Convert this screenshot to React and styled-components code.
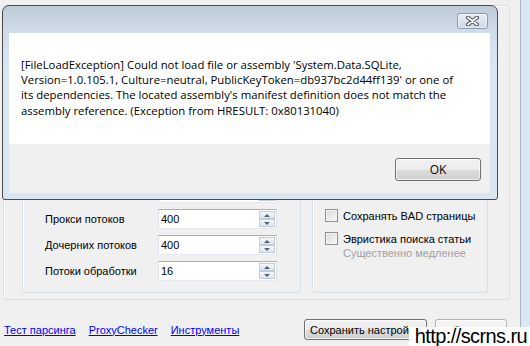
import React from 'react';
import styled, { createGlobalStyle } from 'styled-components';

const GlobalStyle = createGlobalStyle`
  html, body {
    margin: 0;
    padding: 0;
  }
  body {
    width: 530px;
    height: 346px;
    overflow: hidden;
    background: #f0f0f0;
    font-family: "Liberation Sans", Arial, sans-serif;
    font-size: 11px;
    color: #000;
  }
`;

const Window = styled.div`
  position: relative;
  width: 530px;
  height: 346px;
  display: flex;
  overflow: hidden;
`;

const Content = styled.div`
  width: 520px;
  display: flex;
  flex-direction: column;
  padding: 5px 0 0 3px;
  box-sizing: border-box;
`;

const FrameStrip = styled.div`
  flex: 1;
  border-left: 1px solid #aab5c2;
  background: #dbe6f3;
`;

const OuterGroup = styled.div`
  width: 507px;
  height: 295px;
  box-sizing: border-box;
  border: 1px solid #d5dfe5;
  border-radius: 3px;
  box-shadow: inset 1px 1px 0 #fff;
  padding: 20px 21px 6px 18px;
  display: flex;
  gap: 11px;
`;

const Panel = styled.div`
  width: ${(p) => (p.$width ? `${p.$width}px` : 'auto')};
  flex: ${(p) => (p.$width ? 'none' : '1')};
  box-sizing: border-box;
  border: 1px solid #d5dfe5;
  border-radius: 3px;
  box-shadow: inset 1px 1px 0 #fff;
  display: flex;
  flex-direction: column;
  justify-content: flex-end;
  padding: ${(p) => p.$pad};
`;

const Row = styled.div`
  height: 26px;
  display: flex;
  align-items: center;
  padding-left: 22px;
`;

const Label = styled.div`
  width: 113px;
`;

const NumberBox = styled.div`
  width: 119px;
  height: 20px;
  box-sizing: border-box;
  border: 1px solid #abadb3;
  border-color: #abadb3 #dbdfe6 #e3e9ef #e2e3ea;
  background: #fff;
  display: flex;
  align-items: center;
  padding-left: 2px;
`;

const Value = styled.div`
  flex: 1;
`;

const Spinner = styled.div`
  width: 16px;
  height: 16px;
  margin-right: 1px;
  display: flex;
  flex-direction: column;
`;

const SpinButton = styled.div`
  flex: 1;
  box-sizing: border-box;
  border: 1px solid #c3cbd4;
  background: linear-gradient(#f4f6f8, #dfe5ec);
  display: flex;
  align-items: center;
  justify-content: center;
`;

const Arrow = styled.div`
  width: 0;
  height: 0;
  border-left: 3px solid transparent;
  border-right: 3px solid transparent;
  ${(p) => (p.$up ? 'border-bottom' : 'border-top')}: 3px solid #4d6185;
`;

const CheckRow = styled.div`
  height: 15px;
  display: flex;
  align-items: center;
  gap: 5px;
  margin-bottom: ${(p) => p.$gap || 0}px;
`;

const CheckBox = styled.div`
  width: 13px;
  height: 13px;
  box-sizing: border-box;
  border: 1px solid #8e8f8f;
  background: linear-gradient(135deg, #d8d8d8, #f8f8f8);
  box-shadow: inset 0 0 0 1px #f4f4f4;
`;

const Hint = styled.div`
  margin-left: 18px;
  line-height: 14px;
  color: #a0a0a0;
`;

const Footer = styled.div`
  height: 21px;
  margin-top: 19px;
  display: flex;
  align-items: center;
  padding-right: 13px;
`;

const Links = styled.div`
  display: flex;
  gap: 13px;
  padding-left: 1px;
`;

const LinkText = styled.span`
  color: #0000ff;
  text-decoration: underline;
`;

const Buttons = styled.div`
  margin-left: auto;
  display: flex;
  gap: 8px;
`;

const WinButton = styled.div`
  width: ${(p) => p.$width}px;
  height: ${(p) => p.$height || 21}px;
  box-sizing: border-box;
  border: 1px solid ${(p) => (p.$disabled ? '#adb2b5' : '#707070')};
  border-radius: 3px;
  background: ${(p) =>
    p.$disabled
      ? '#f4f4f4'
      : 'linear-gradient(#f2f2f2 0%, #ebebeb 50%, #dddddd 51%, #cfcfcf 100%)'};
  box-shadow: inset 0 0 0 1px rgba(255, 255, 255, 0.7);
  color: ${(p) => (p.$disabled ? '#838383' : '#000')};
  font-size: ${(p) => p.$fontSize || 11}px;
  display: flex;
  align-items: center;
  justify-content: ${(p) => (p.$left ? 'flex-start' : 'center')};
  padding-left: ${(p) => (p.$left ? 5 : 0)}px;
  white-space: nowrap;
  overflow: hidden;
`;

const Dialog = styled.div`
  position: absolute;
  left: 2px;
  top: 5px;
  width: 496px;
  height: 195px;
  box-sizing: border-box;
  border: 1px solid #4b4b4b;
  border-radius: 7px 7px 3px 3px;
  background: linear-gradient(#bdcad8 0px, #d0dcea 26px, #dae5f2 60px, #dae5f2 100%);
  padding: 27px 7px 6px 6px;
  display: flex;
  flex-direction: column;
`;

const CloseButton = styled.div`
  position: absolute;
  left: 454px;
  top: 7px;
  width: 31px;
  height: 16px;
  box-sizing: border-box;
  border: 1px solid #8b9aab;
  border-radius: 3px;
  background: linear-gradient(#e9eef4, #cdd7e2);
  box-shadow: inset 0 0 0 1px rgba(255, 255, 255, 0.5);
  display: flex;
  align-items: center;
  justify-content: center;
`;

const Client = styled.div`
  flex: 1;
  display: flex;
  flex-direction: column;
  font-family: "Open Sans", "Noto Sans", sans-serif;
`;

const Message = styled.div`
  height: 111px;
  box-sizing: border-box;
  background: #fff;
  padding: 24px 0 0 12px;
  font-size: 11.35px;
  line-height: 15.2px;
  white-space: nowrap;
`;

const ButtonBar = styled.div`
  flex: 1;
  background: #f0f0f0;
  display: flex;
  justify-content: flex-end;
  padding: 14px 9px 0 0;
`;

const Watermark = styled.div`
  position: absolute;
  right: 0;
  bottom: 0;
  background: #fff;
  padding: 0 3px 0 6px;
  font-family: "Liberation Sans", Arial, sans-serif;
  font-size: 20px;
  letter-spacing: -0.6px;
  line-height: 19px;
  color: #000;
`;

const spinRows = [
  { label: 'Потоков', value: '50' },
  { label: 'Прокси потоков', value: '400' },
  { label: 'Дочерних потоков', value: '400' },
  { label: 'Потоки обработки', value: '16' },
];

const CloseGlyph = () => (
  <svg width="13" height="10" viewBox="0 0 13 10">
    <path d="M2 1.5 L11 8.5 M11 1.5 L2 8.5" stroke="#4a5360" strokeWidth="4" strokeLinecap="round" />
    <path d="M2 1.5 L11 8.5 M11 1.5 L2 8.5" stroke="#fff" strokeWidth="2" strokeLinecap="round" />
  </svg>
);

export default function App() {
  return (
    <>
      <GlobalStyle />
      <Window>
        <Content>
          <OuterGroup>
            <Panel $width={279} $pad="0 0 8px 0">
              {spinRows.map((r) => (
                <Row key={r.label}>
                  <Label>{r.label}</Label>
                  <NumberBox>
                    <Value>{r.value}</Value>
                    <Spinner>
                      <SpinButton>
                        <Arrow $up />
                      </SpinButton>
                      <SpinButton>
                        <Arrow />
                      </SpinButton>
                    </Spinner>
                  </NumberBox>
                </Row>
              ))}
            </Panel>
            <Panel $pad="0 0 32px 12px">
              <CheckRow $gap={8}>
                <CheckBox />
                <span>Сохранять BAD страницы</span>
              </CheckRow>
              <CheckRow>
                <CheckBox />
                <span>Эвристика поиска статьи</span>
              </CheckRow>
              <Hint>Существенно медленее</Hint>
            </Panel>
          </OuterGroup>
          <Footer>
            <Links>
              <LinkText>Тест парсинга</LinkText>
              <LinkText>ProxyChecker</LinkText>
              <LinkText>Инструменты</LinkText>
            </Links>
            <Buttons>
              <WinButton $width={123} $left>
                Сохранить настройки
              </WinButton>
              <WinButton $width={72} $disabled>
                Запуск
              </WinButton>
            </Buttons>
          </Footer>
        </Content>
        <FrameStrip />

        <Dialog>
          <CloseButton>
            <CloseGlyph />
          </CloseButton>
          <Client>
            <Message>
              [FileLoadException] Could not load file or assembly 'System.Data.SQLite,
              <br />
              Version=1.0.105.1, Culture=neutral, PublicKeyToken=db937bc2d44ff139' or one of
              <br />
              its dependencies. The located assembly's manifest definition does not match the
              <br />
              assembly reference. (Exception from HRESULT: 0x80131040)
            </Message>
            <ButtonBar>
              <WinButton $width={86} $height={23} $fontSize={12}>
                OK
              </WinButton>
            </ButtonBar>
          </Client>
        </Dialog>

        <Watermark>http://scrns.ru</Watermark>
      </Window>
    </>
  );
}
